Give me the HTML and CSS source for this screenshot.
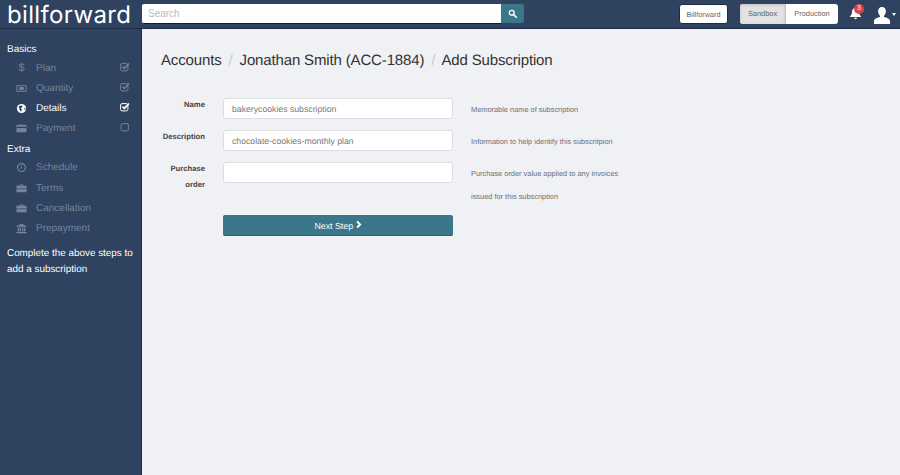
FILE: index.html
```html
<!DOCTYPE html>
<html lang="en">
<head>
<meta charset="utf-8">
<title>Add Subscription</title>
<link rel="stylesheet" href="styles.css">
</head>
<body>
<header class="topbar">
  <div class="logo">billforward</div>
  <div class="search">
    <input class="search-input" placeholder="Search">
    <button class="search-btn" aria-label="Search">
      <svg viewBox="0 0 12 12" width="9" height="9"><circle cx="5" cy="5" r="3.2" fill="none" stroke="#fff" stroke-width="1.8"/><path d="M7.4 7.4 11 11" stroke="#fff" stroke-width="2.2" stroke-linecap="round"/></svg>
    </button>
  </div>
  <div class="top-right">
    <button class="btn-account">Billforward</button>
    <div class="env">
      <span class="env-item env-active">Sandbox</span>
      <span class="env-item">Production</span>
    </div>
    <div class="bell">
      <svg viewBox="0 0 14 14" width="13" height="14"><path d="M7 1.5c-2.600 0-3.800 2-3.800 4.300 0 2.500-.8 3.400-2 4.500v.9h11.600v-.9c-1.200-1.100-2-2-2-4.500C10.800 3.500 9.600 1.500 7 1.500z" fill="#fff"/><path d="M5.400 12a1.600 1.600 0 0 0 3.200 0z" fill="#fff"/></svg>
      <span class="badge">3</span>
    </div>
    <div class="user">
      <svg viewBox="0 0 18 18" width="18" height="18"><path d="M9 1c2.500 0 3.900 1.900 3.900 4.300 0 1.900-.8 3.500-1.900 4.500v1.300c2.600.7 5.500 1.700 6 3.400V18H1v-3.500c.5-1.700 3.400-2.700 6-3.400V9.800C5.900 8.800 5.100 7.200 5.100 5.300 5.100 2.900 6.500 1 9 1z" fill="#fff"/></svg>
      <span class="caret"></span>
    </div>
  </div>
</header>
<div class="layout">
  <aside class="sidebar">
    <h4 class="side-head">Basics</h4>
    <ul class="steps">
      <li class="step"><span class="step-icon dollar">$</span><span class="step-name">Plan</span>
        <svg class="check" viewBox="0 0 10 10"><rect x=".6" y="1.600" width="7.300" height="7.300" rx="1.500" fill="none" stroke="currentColor"/><path d="M2.500 4.500 4.300 6.400 9 1.500" fill="none" stroke="currentColor" stroke-width="1.500"/></svg></li>
      <li class="step"><svg class="step-icon" viewBox="0 0 12 12"><path fill-rule="evenodd" d="M.5 2.500h11v7H.5zM1.500 3.500v5h9v-5z" fill="currentColor"/><rect x="3.500" y="4.500" width="5" height="3" fill="currentColor"/></svg><span class="step-name">Quantity</span>
        <svg class="check" viewBox="0 0 10 10"><rect x=".6" y="1.600" width="7.300" height="7.300" rx="1.500" fill="none" stroke="currentColor"/><path d="M2.500 4.500 4.300 6.400 9 1.500" fill="none" stroke="currentColor" stroke-width="1.500"/></svg></li>
      <li class="step step-current"><svg class="step-icon" viewBox="0 0 12 12"><circle cx="6" cy="6" r="5" fill="currentColor"/><path d="M3 3.500 6.500 2.500 7 4.500 5 5.500 6.500 7 5.500 9.500 4 7.500z" fill="#2f4260"/><path d="M8.500 6 10.500 5.500 10 8z" fill="#2f4260"/></svg><span class="step-name">Details</span>
        <svg class="check" viewBox="0 0 10 10"><rect x=".6" y="1.600" width="7.300" height="7.300" rx="1.500" fill="none" stroke="currentColor"/><path d="M2.500 4.500 4.300 6.400 9 1.500" fill="none" stroke="currentColor" stroke-width="1.700"/></svg></li>
      <li class="step"><svg class="step-icon" viewBox="0 0 12 12"><rect x=".5" y="2" width="11" height="8" rx="1" fill="currentColor"/><rect x=".5" y="4" width="11" height="1.500" fill="#2f4260"/></svg><span class="step-name">Payment</span>
        <svg class="check" viewBox="0 0 10 10"><rect x="1.100" y="1.600" width="7.300" height="7.300" rx="1.500" fill="none" stroke="currentColor"/></svg></li>
    </ul>
    <h4 class="side-head">Extra</h4>
    <ul class="steps">
      <li class="step"><svg class="step-icon" viewBox="0 0 12 12"><circle cx="6" cy="6" r="4.300" fill="none" stroke="currentColor" stroke-width="1.300"/><path d="M6 3.500V6.300L4.300 7.300" fill="none" stroke="currentColor"/></svg><span class="step-name">Schedule</span></li>
      <li class="step"><svg class="step-icon" viewBox="0 0 12 12"><path fill-rule="evenodd" d="M4 3V1.500h4V3h3.500v7H.5V3zM5 2.500V3h2v-.5z" fill="currentColor"/><rect x=".5" y="6" width="11" height=".7" fill="#2f4260"/></svg><span class="step-name">Terms</span></li>
      <li class="step"><svg class="step-icon" viewBox="0 0 12 12"><path fill-rule="evenodd" d="M4 3V1.500h4V3h3.500v7H.5V3zM5 2.500V3h2v-.5z" fill="currentColor"/><rect x=".5" y="6" width="11" height=".7" fill="#2f4260"/></svg><span class="step-name">Cancellation</span></li>
      <li class="step"><svg class="step-icon" viewBox="0 0 12 12"><path d="M6 .8 11.500 3.300V4H.5v-.7z" fill="currentColor"/><path d="M1.800 4.800h1.500v4.500H1.800zM4 4.800h1.500v4.500H4zM6.500 4.800H8v4.500H6.500zM8.800 4.800h1.400v4.500H8.800z" fill="currentColor"/><rect x=".5" y="9.800" width="11" height="1.400" fill="currentColor"/></svg><span class="step-name">Prepayment</span></li>
    </ul>
    <p class="side-note">Complete the above steps to add a subscription</p>
  </aside>
  <main class="content">
    <h1 class="crumbs">Accounts <span class="sep">/</span> Jonathan Smith (ACC-1884) <span class="sep">/</span> Add Subscription</h1>
    <form class="form">
      <div class="row">
        <label class="label">Name</label>
        <input class="field" value="bakerycookies subscription">
        <p class="hint">Memorable name of subscription</p>
      </div>
      <div class="row">
        <label class="label">Description</label>
        <input class="field" value="chocolate-cookies-monthly plan">
        <p class="hint">Information to help identify this subscritpion</p>
      </div>
      <div class="row row-last">
        <label class="label">Purchase order</label>
        <input class="field">
        <p class="hint">Purchase order value applied to any invoices issued for this subscription</p>
      </div>
      <div class="row">
        <button type="button" class="next">Next Step
          <svg viewBox="0 0 8 10" width="6" height="9"><path d="M1.500 1 5.500 5 1.500 9" fill="none" stroke="#fff" stroke-width="2.500"/></svg>
        </button>
      </div>
    </form>
  </main>
</div>
</body>
</html>
```

FILE: styles.css
```css
* { box-sizing: border-box; }
html, body { height: 100%; }
body {
  margin: 0;
  font-family: "Liberation Sans", Arial, sans-serif;
  font-size: 10px;
  text-rendering: geometricPrecision;
  background: #2f4260;
  display: flex;
  flex-direction: column;
  overflow: hidden;
}
.topbar {
  height: 29px;
  flex: none;
  display: flex;
  align-items: flex-start;
  background: #2f4260;
  border-bottom: 1px solid #1f2c47;
}
.logo {
  width: 142px;
  padding-left: 7px;
  font-family: "Inter", sans-serif;
  font-size: 24px;
  line-height: 29px;
  letter-spacing: .35px;
  color: #fff;
  white-space: nowrap;
}
.search { display: flex; margin-top: 4px; }
.search-input {
  width: 359px;
  height: 20px;
  padding: 0 6px;
  border: 0;
  border-bottom: 1px solid #12193a;
  border-radius: 2px 0 0 2px;
  font: 10px "Liberation Sans", Arial, sans-serif;
  background: #fff;
}
.search-input::placeholder { color: #b8bcc2; opacity: 1; }
.search-btn {
  width: 23px;
  height: 19px;
  padding: 0;
  border: 0;
  border-radius: 0 2px 2px 0;
  background: #3a778a;
  display: flex;
  align-items: center;
  justify-content: center;
}
.top-right {
  margin-left: auto;
  display: flex;
  align-items: flex-start;
  margin-top: 4px;
}
.btn-account {
  width: 49px;
  height: 20px;
  margin-right: 12px;
  padding: 0;
  border: 1px solid #1f2c47;
  border-radius: 3px;
  background: #fff;
  color: #666;
  font: 7.300px "Liberation Sans", Arial, sans-serif;
  text-rendering: geometricPrecision;
}
.env {
  display: flex;
  width: 98px;
  height: 20px;
  border-radius: 3px;
  background: #fff;
  overflow: hidden;
  margin-right: 11px;
}
.env-item {
  flex: 1 1 auto;
  line-height: 20px;
  text-align: center;
  font-size: 7.400px;
  color: #666;
}
.env-active {
  flex: 0 0 46px;
  background: #e2e2e2;
  border-right: 1px solid #c4c4c4;
  box-shadow: inset 0 1px 3px rgba(0,0,0,.15);
}
.bell { position: relative; width: 13px; height: 16px; margin: 2px 11px 0 0; }
.badge {
  position: absolute;
  left: 5px;
  top: -2px;
  width: 10px;
  height: 10px;
  border-radius: 50%;
  background: #d9434e;
  color: #fff;
  font-size: 7px;
  line-height: 10px;
  text-align: center;
}
.user { display: flex; align-items: flex-start; margin: 2px 1px 0 0; width: 26px; height: 18px; }
.caret {
  margin: 7px 0 0 1px;
  border-left: 2.500px solid transparent;
  border-right: 2.500px solid transparent;
  border-top: 3px solid #fff;
}
.layout { flex: 1; display: flex; min-height: 0; }
.sidebar {
  width: 142px;
  flex: none;
  padding: 13px 0 0 7px;
  border-right: 1px solid #1f2c47;
  background: #2f4260;
  color: #fff;
}
.side-head {
  margin: 0;
  font-size: 10px;
  line-height: 16px;
  font-weight: 400;
  color: #fff;
}
.steps { list-style: none; margin: 0 0 3px; padding: 0; }
.step {
  display: flex;
  align-items: center;
  height: 20.200px;
  padding-left: 9px;
  color: #76849c;
  font-size: 10px;
}
.step-current { color: #fff; }
.step-icon {
  width: 11px;
  height: 11px;
  flex: none;
  margin-right: 9px;
}
.dollar { text-align: center; font-size: 11px; line-height: 11px; }
.step-name { flex: 1; }
.check { width: 10px; height: 10px; flex: none; margin: -3px 11px 0 0; }
.side-note {
  margin: 7px 0 0;
  width: 134px;
  font-size: 9.900px;
  line-height: 16px;
  color: #fff;
}
.content {
  flex: 1;
  background: #f0f1f5;
  padding: 23px 0 0 19px;
}
.crumbs {
  margin: 0;
  font-size: 15px;
  line-height: 18px;
  letter-spacing: -.15px;
  font-weight: 400;
  color: #333;
}
.sep { color: #c9cbd0; margin: 0 3px; }
.form { margin-top: 28px; }
.row {
  display: grid;
  grid-template-columns: 44px 230px 150px;
  column-gap: 18px;
  align-items: start;
  height: 21px;
  margin-bottom: 11px;
}
.row-last { margin-bottom: 32px; }
.label {
  font-size: 7.700px;
  font-weight: 700;
  color: #444;
  text-align: right;
  line-height: 16px;
  margin-top: -1px;
}
.field {
  width: 230px;
  height: 21px;
  padding: 0 8px;
  border: 1px solid #dcdde1;
  border-radius: 3px;
  background: #fff;
  color: #777;
  font: 8.700px "Liberation Sans", Arial, sans-serif;
  text-rendering: geometricPrecision;
}
.hint {
  margin: 0;
  font-size: 7.400px;
  line-height: 23px;
  color: #6c6f75;
}
.next {
  grid-column: 2;
  width: 230px;
  height: 21px;
  padding: 0;
  border: 0;
  border-bottom: 1px solid #2b5f70;
  border-radius: 2px;
  background: #3a778a;
  color: #fff;
  font: 8.800px "Liberation Sans", Arial, sans-serif;
  text-rendering: geometricPrecision;
}
```
